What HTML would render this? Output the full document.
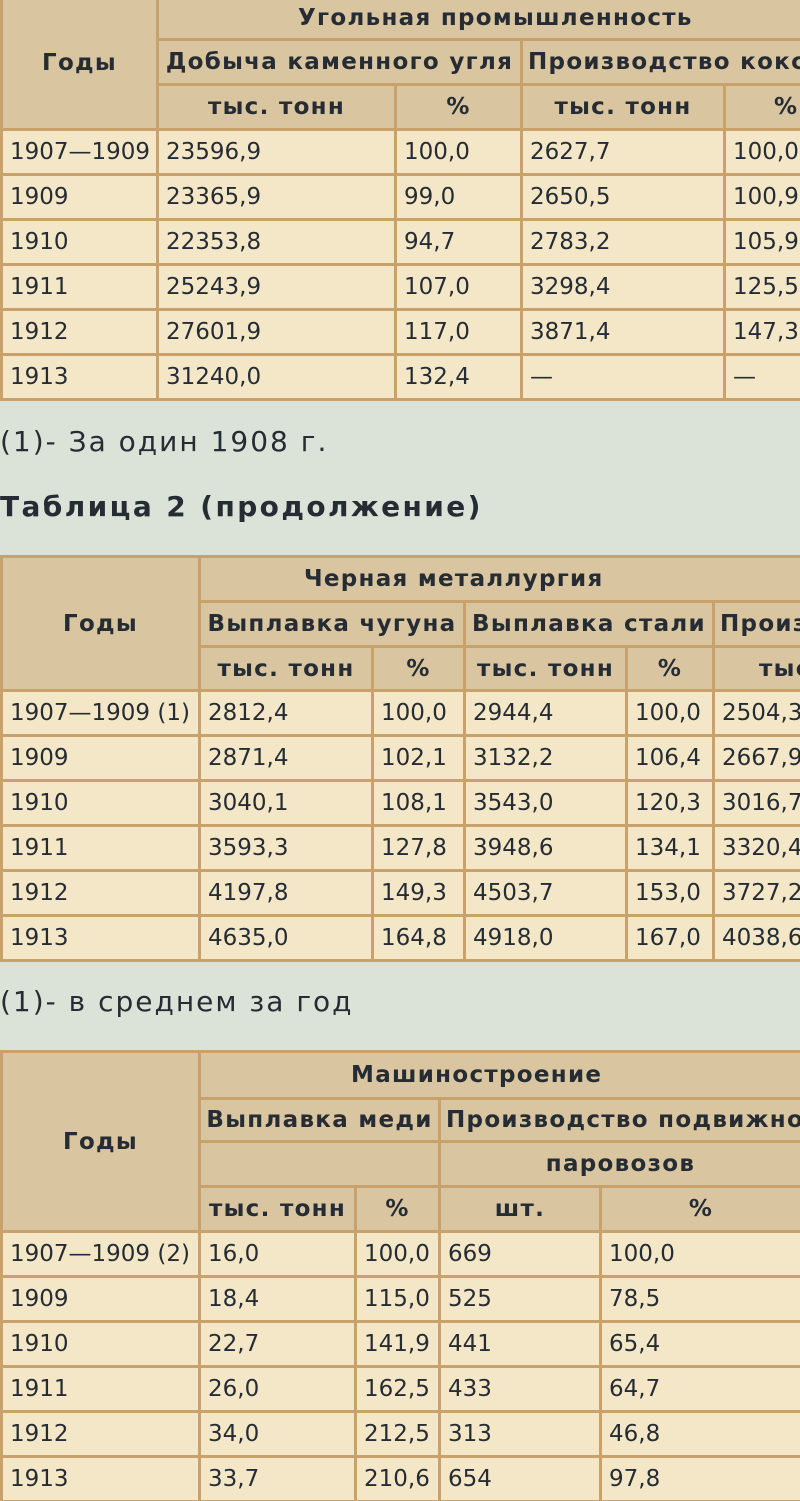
<!DOCTYPE html>
<html><head><meta charset="utf-8"><style>
html,body{margin:0;padding:0;}
body{width:800px;height:1501px;overflow:hidden;background:#dbe3d9;font-family:"DejaVu Sans","Liberation Sans",sans-serif;color:#262c33;}
#w{position:relative;width:800px;height:1501px;overflow:hidden;}
table{position:absolute;left:0;border-collapse:collapse;table-layout:fixed;font-size:23px;}
td,th{border:3px solid #c9a26b;padding:0 0 0 7px;white-space:nowrap;overflow:hidden;text-align:left;font-weight:normal;}
th{background:#d9c6a0;font-weight:bold;text-align:center;padding:0;letter-spacing:1.3px;}
td{background:#f3e7c7;}
tr{height:45px;}
.t{position:absolute;left:0;font-size:28px;letter-spacing:2px;white-space:nowrap;}
</style></head><body><div id="w">

<table style="top:-6px;width:860px">
<colgroup><col style="width:156px"><col style="width:238px"><col style="width:126px"><col style="width:203px"><col style="width:137px"></colgroup>
<tr style="height:44px"><th rowspan="3">Годы</th><th colspan="4" style="text-align:left;padding-left:139px">Угольная промышленность</th></tr>
<tr><th colspan="2">Добыча каменного угля</th><th colspan="2" style="text-align:left;padding-left:5px">Производство кокса</th></tr>
<tr><th>тыс. тонн</th><th>%</th><th>тыс. тонн</th><th style="text-align:left;padding-left:48px">%</th></tr>
<tr><td>1907—1909</td><td>23596,9</td><td>100,0</td><td>2627,7</td><td>100,0</td></tr>
<tr><td>1909</td><td>23365,9</td><td>99,0</td><td>2650,5</td><td>100,9</td></tr>
<tr><td>1910</td><td>22353,8</td><td>94,7</td><td>2783,2</td><td>105,9</td></tr>
<tr><td>1911</td><td>25243,9</td><td>107,0</td><td>3298,4</td><td>125,5</td></tr>
<tr><td>1912</td><td>27601,9</td><td>117,0</td><td>3871,4</td><td>147,3</td></tr>
<tr><td>1913</td><td>31240,0</td><td>132,4</td><td>—</td><td>—</td></tr>
</table>

<div class="t" style="top:425px">(1)- За один 1908 г.</div>
<div class="t" style="top:490px;font-weight:bold;letter-spacing:2.4px">Таблица 2 (продолжение)</div>

<table style="top:555px;width:934px">
<colgroup><col style="width:198px"><col style="width:173px"><col style="width:92px"><col style="width:162px"><col style="width:87px"><col style="width:222px"></colgroup>
<tr><th rowspan="3">Годы</th><th colspan="5" style="text-align:left;padding-left:103px">Черная металлургия</th></tr>
<tr><th colspan="2">Выплавка чугуна</th><th colspan="2">Выплавка стали</th><th style="text-align:left;padding-left:5px">Производство</th></tr>
<tr style="height:44px"><th>тыс. тонн</th><th>%</th><th>тыс. тонн</th><th>%</th><th style="text-align:left;padding-left:44px">тыс. тонн</th></tr>
<tr><td>1907—1909 (1)</td><td>2812,4</td><td>100,0</td><td>2944,4</td><td>100,0</td><td>2504,3</td></tr>
<tr><td>1909</td><td>2871,4</td><td>102,1</td><td>3132,2</td><td>106,4</td><td>2667,9</td></tr>
<tr><td>1910</td><td>3040,1</td><td>108,1</td><td>3543,0</td><td>120,3</td><td>3016,7</td></tr>
<tr><td>1911</td><td>3593,3</td><td>127,8</td><td>3948,6</td><td>134,1</td><td>3320,4</td></tr>
<tr><td>1912</td><td>4197,8</td><td>149,3</td><td>4503,7</td><td>153,0</td><td>3727,2</td></tr>
<tr><td>1913</td><td>4635,0</td><td>164,8</td><td>4918,0</td><td>167,0</td><td>4038,6</td></tr>
</table>

<div class="t" style="top:985px">(1)- в среднем за год</div>

<table style="top:1050px;width:800px">
<colgroup><col style="width:198px"><col style="width:156px"><col style="width:84px"><col style="width:161px"><col style="width:201px"></colgroup>
<tr style="height:47px"><th rowspan="4">Годы</th><th colspan="4" style="text-align:left;padding-left:150px">Машиностроение</th></tr>
<tr style="height:43px"><th colspan="2">Выплавка меди</th><th colspan="2" style="text-align:left;padding-left:5px">Производство подвижного состава</th></tr>
<tr><th colspan="2"></th><th colspan="2">паровозов</th></tr>
<tr><th>тыс. тонн</th><th>%</th><th>шт.</th><th>%</th></tr>
<tr><td>1907—1909 (2)</td><td>16,0</td><td>100,0</td><td>669</td><td>100,0</td></tr>
<tr><td>1909</td><td>18,4</td><td>115,0</td><td>525</td><td>78,5</td></tr>
<tr><td>1910</td><td>22,7</td><td>141,9</td><td>441</td><td>65,4</td></tr>
<tr><td>1911</td><td>26,0</td><td>162,5</td><td>433</td><td>64,7</td></tr>
<tr><td>1912</td><td>34,0</td><td>212,5</td><td>313</td><td>46,8</td></tr>
<tr><td>1913</td><td>33,7</td><td>210,6</td><td>654</td><td>97,8</td></tr>
</table>

</div></body></html>
